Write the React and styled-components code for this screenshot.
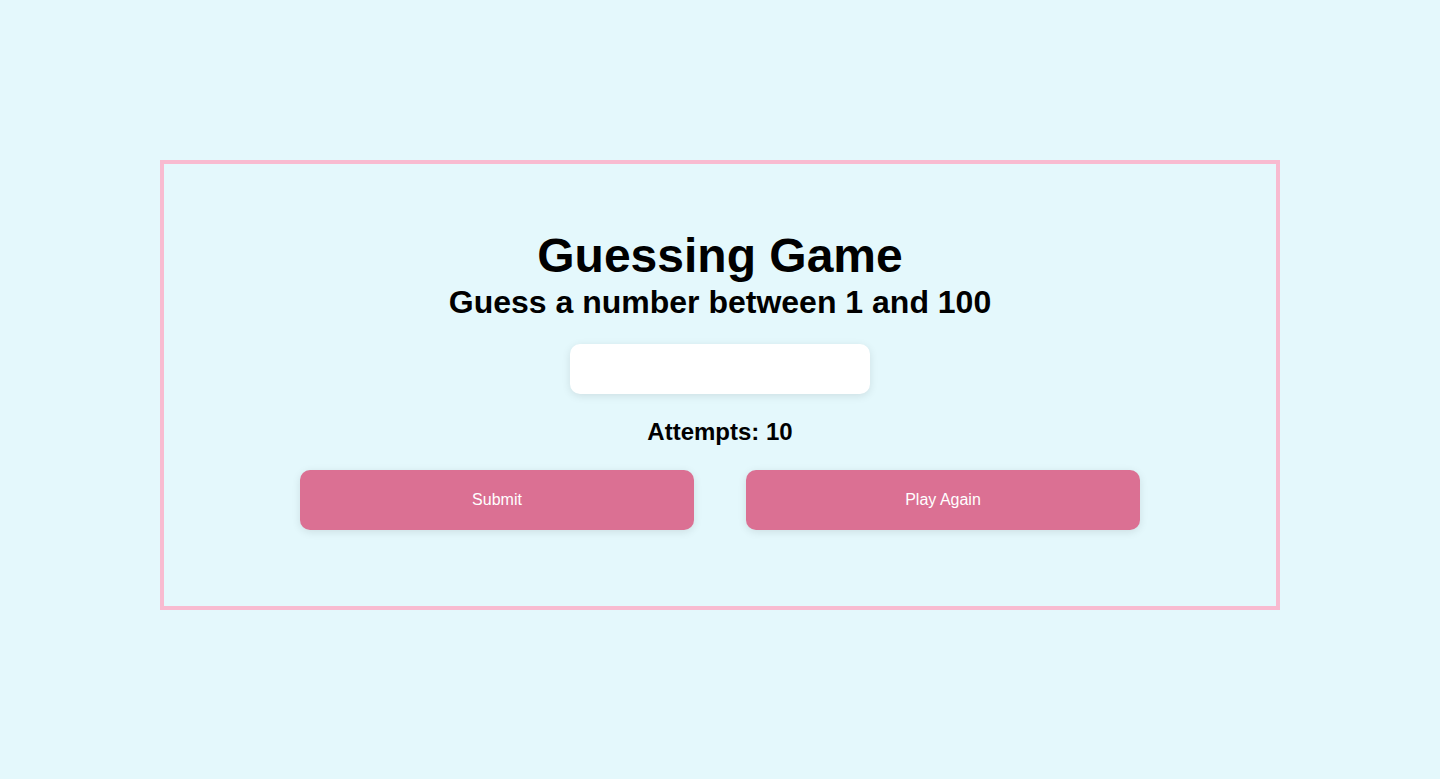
import styled, { createGlobalStyle } from 'styled-components';

const GlobalStyle = createGlobalStyle`
  body {
    margin: 0;
    background-color: #e4f8fc;
    font-family: "Liberation Sans", Arial, sans-serif;
  }
`;

const Page = styled.div`
  min-height: 100vh;
  padding-top: 160px;
  box-sizing: border-box;
`;

const Board = styled.main`
  width: 1120px;
  margin: 0 auto;
  box-sizing: border-box;
  border: 4px solid #f8bbd0;
  padding: 64px 0 76px;
  display: flex;
  flex-direction: column;
  align-items: center;
`;

const Title = styled.h1`
  margin: 0;
  font-size: 48px;
  font-weight: bold;
  color: #000;
`;

const Subtitle = styled.h2`
  margin: 1px 0 23px;
  font-size: 32px;
  font-weight: bold;
  color: #000;
`;

const GuessInput = styled.input`
  width: 300px;
  height: 50px;
  box-sizing: border-box;
  border: none;
  border-radius: 10px;
  background: #fff;
  box-shadow: 0 2px 8px rgba(0, 0, 0, 0.1);
  font-size: 18px;
  text-align: center;
  outline: none;
`;

const Attempts = styled.h3`
  margin: 24px 0;
  font-size: 24px;
  font-weight: bold;
  color: #000;
`;

const Actions = styled.div`
  display: flex;
  gap: 52px;
`;

const Button = styled.button`
  width: 394px;
  height: 60px;
  border: none;
  border-radius: 10px;
  background-color: #db7093;
  color: #fff;
  font-family: "Liberation Sans", Arial, sans-serif;
  font-size: 16px;
  box-shadow: 0 2px 8px rgba(0, 0, 0, 0.1);
  cursor: pointer;
`;

export default function App() {
  return (
    <>
      <GlobalStyle />
      <Page>
        <Board>
          <Title>Guessing Game</Title>
          <Subtitle>Guess a number between 1 and 100</Subtitle>
          <GuessInput type="number" />
          <Attempts>Attempts: 10</Attempts>
          <Actions>
            <Button>Submit</Button>
            <Button>Play Again</Button>
          </Actions>
        </Board>
      </Page>
    </>
  );
}
